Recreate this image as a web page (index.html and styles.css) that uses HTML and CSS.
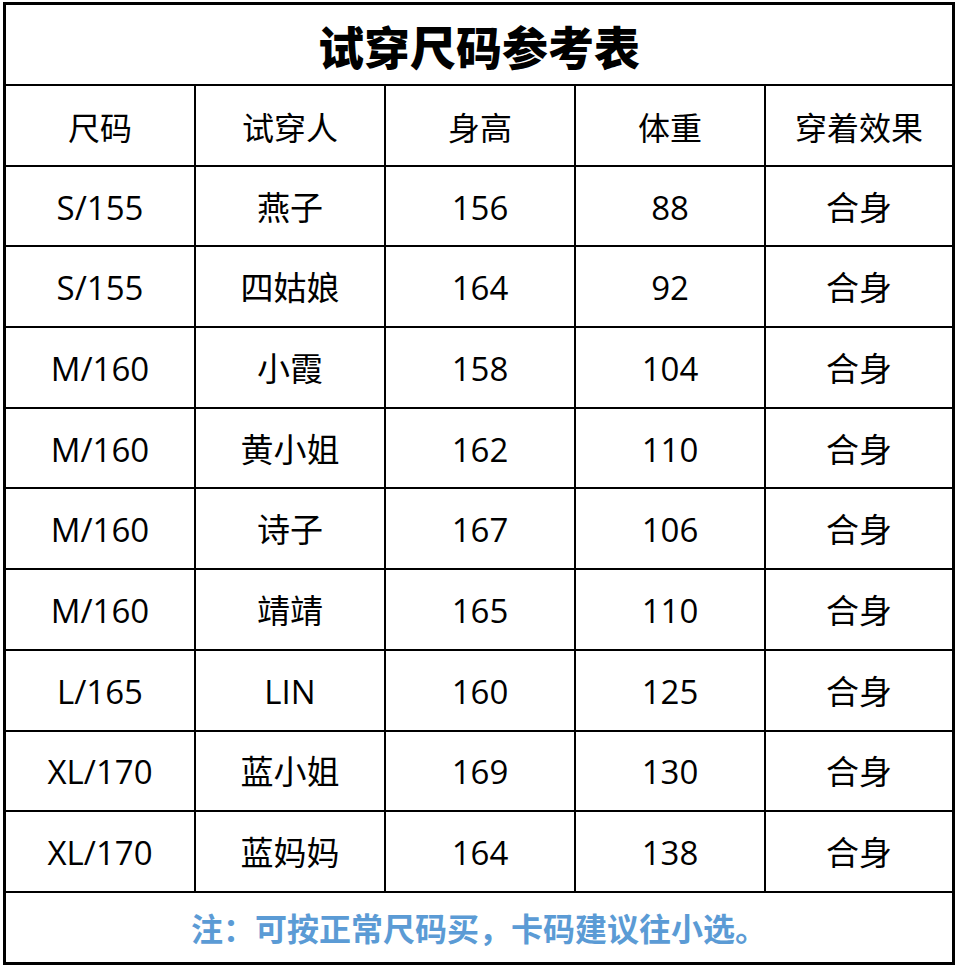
FILE: index.html
```html
<!DOCTYPE html>
<html lang="zh-CN">
<head>
<meta charset="utf-8">
<title>试穿尺码参考表</title>
<link rel="stylesheet" href="styles.css">
</head>
<body>
<div class="sheet">
  <div class="cell title">试穿尺码参考表</div>
  <div class="cell head">尺码</div><div class="cell head">试穿人</div><div class="cell head">身高</div><div class="cell head">体重</div><div class="cell head">穿着效果</div>
  <div class="cell">S/155</div><div class="cell">燕子</div><div class="cell">156</div><div class="cell">88</div><div class="cell">合身</div>
  <div class="cell">S/155</div><div class="cell">四姑娘</div><div class="cell">164</div><div class="cell">92</div><div class="cell">合身</div>
  <div class="cell">M/160</div><div class="cell">小霞</div><div class="cell">158</div><div class="cell">104</div><div class="cell">合身</div>
  <div class="cell">M/160</div><div class="cell">黄小姐</div><div class="cell">162</div><div class="cell">110</div><div class="cell">合身</div>
  <div class="cell">M/160</div><div class="cell">诗子</div><div class="cell">167</div><div class="cell">106</div><div class="cell">合身</div>
  <div class="cell">M/160</div><div class="cell">靖靖</div><div class="cell">165</div><div class="cell">110</div><div class="cell">合身</div>
  <div class="cell">L/165</div><div class="cell">LIN</div><div class="cell">160</div><div class="cell">125</div><div class="cell">合身</div>
  <div class="cell">XL/170</div><div class="cell">蓝小姐</div><div class="cell">169</div><div class="cell">130</div><div class="cell">合身</div>
  <div class="cell">XL/170</div><div class="cell">蓝妈妈</div><div class="cell">164</div><div class="cell">138</div><div class="cell">合身</div>
  <div class="cell note">注：可按正常尺码买，卡码建议往小选。</div>
</div>
</body>
</html>
```

FILE: styles.css
```css
html, body {
  margin: 0;
  padding: 0;
  background: #ffffff;
}

body {
  padding: 2px 0 0 3px;
  font-family: "Open Sans", "Noto Sans CJK SC", sans-serif;
  color: #000000;
}

.sheet {
  width: 946px;
  height: 957px;
  border: 3px solid #000000;
  background: #000000;
  display: grid;
  grid-template-columns: 188px 188px 188px 188px 186px;
  grid-template-rows: 79px repeat(10, 1fr) 69px;
  gap: 2px;
}

.cell {
  background: #ffffff;
  display: flex;
  align-items: center;
  justify-content: center;
  font-size: 33px;
  line-height: 1;
  padding-top: 2px;
  box-sizing: border-box;
}

.head {
  font-family: "Noto Sans CJK SC", sans-serif;
  font-size: 32px;
}

.title {
  grid-column: 1 / -1;
  font-family: "Noto Sans CJK SC", sans-serif;
  font-weight: 900;
  font-size: 46px;
  padding-top: 0;
}

.note {
  grid-column: 1 / -1;
  font-family: "Noto Sans CJK SC", sans-serif;
  font-weight: 700;
  font-size: 32px;
  color: #5b9bd5;
  padding-top: 0;
}
```
